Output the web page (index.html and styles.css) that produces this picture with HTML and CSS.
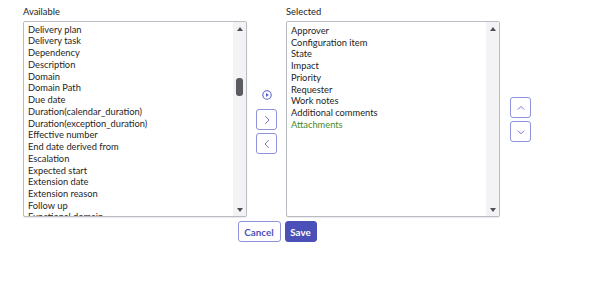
FILE: index.html
```html
<!DOCTYPE html>
<html>
<head>
<meta charset="utf-8">
<link rel="stylesheet" href="styles.css">
</head>
<body>
<div class="form">
  <div class="lists">
    <div class="col col-left">
      <div class="label">Available</div>
      <div class="box box-left">
        <div class="viewport">
          <ul class="items items-scrolled">
            <li>Deliverable</li>
            <li>Delivery plan</li>
            <li>Delivery task</li>
            <li>Dependency</li>
            <li>Description</li>
            <li>Domain</li>
            <li>Domain Path</li>
            <li>Due date</li>
            <li>Duration(calendar_duration)</li>
            <li>Duration(exception_duration)</li>
            <li>Effective number</li>
            <li>End date derived from</li>
            <li>Escalation</li>
            <li>Expected start</li>
            <li>Extension date</li>
            <li>Extension reason</li>
            <li>Follow up</li>
            <li>Functional domain</li>
          </ul>
        </div>
        <div class="scrollbar">
          <span class="arrow arrow-up"></span>
          <div class="track"><span class="thumb"></span></div>
          <span class="arrow arrow-down"></span>
        </div>
      </div>
    </div>
    <div class="mid">
      <svg class="play" width="10" height="10" viewBox="0 0 10 10"><circle cx="5" cy="5" r="4.2" fill="none" stroke="#5b5fd0" stroke-width="1.1"/><path d="M4 3.1 L6.9 5 L4 6.9 Z" fill="#5b5fd0"/></svg>
      <button class="icon-btn"><svg width="10" height="10" viewBox="0 0 10 10"><path d="M3.3 1.2 L7 5 L3.3 8.8" fill="none" stroke="#6f73d6" stroke-width="1"/></svg></button>
      <button class="icon-btn"><svg width="10" height="10" viewBox="0 0 10 10"><path d="M6.7 1.2 L3 5 L6.7 8.8" fill="none" stroke="#6f73d6" stroke-width="1"/></svg></button>
    </div>
    <div class="col col-right">
      <div class="label">Selected</div>
      <div class="box box-right">
        <div class="viewport">
          <ul class="items items-right">
            <li>Approver</li>
            <li>Configuration item</li>
            <li>State</li>
            <li>Impact</li>
            <li>Priority</li>
            <li>Requester</li>
            <li>Work notes</li>
            <li>Additional comments</li>
            <li class="green">Attachments</li>
          </ul>
        </div>
        <div class="scrollbar">
          <span class="arrow arrow-up"></span>
          <div class="track"></div>
          <span class="arrow arrow-down"></span>
        </div>
      </div>
    </div>
    <div class="order">
      <button class="icon-btn"><svg width="10" height="10" viewBox="0 0 10 10"><path d="M1.8 6.6 L5 3.4 L8.2 6.6" fill="none" stroke="#6f73d6" stroke-width="1"/></svg></button>
      <button class="icon-btn"><svg width="10" height="10" viewBox="0 0 10 10"><path d="M1.8 3.6 L5 6.8 L8.2 3.6" fill="none" stroke="#6f73d6" stroke-width="1"/></svg></button>
    </div>
  </div>
  <div class="actions">
    <button class="btn btn-cancel">Cancel</button>
    <button class="btn btn-save">Save</button>
  </div>
</div>
</body>
</html>
```
FILE: styles.css
```css
html, body {
  margin: 0;
  padding: 0;
  background: #ffffff;
}
body {
  font-family: Lato, "Open Sans", sans-serif;
  color: #1e1e1e;
}
.form {
  width: 508px;
  padding: 6px 0 0 23px;
}
.lists {
  display: flex;
  align-items: flex-end;
}
.col {
  display: flex;
  flex-direction: column;
}
.label {
  font-size: 9.4px;
  line-height: 12px;
  height: 15px;
  color: #222222;
}
.box {
  display: flex;
  height: 196px;
  border: 1px solid #b9bcc2;
  border-radius: 2px;
  box-sizing: border-box;
  background: #ffffff;
  box-shadow: 0 1px 1px rgba(0,0,0,0.08);
}
.box-left { width: 224px; }
.box-right { width: 214px; }
.viewport {
  flex: 1;
  overflow: hidden;
  padding: 0 4px;
}
.items {
  list-style: none;
  margin: 0;
  padding: 2px 0 0 0;
  font-size: 9.3px;
  line-height: 11.73px;
}
.items-scrolled {
  margin-top: -12px;
}
.items-right {
  padding-top: 3px;
}
.items li {
  white-space: nowrap;
}
.items li.green {
  color: #3f8a2c;
}
.scrollbar {
  width: 13px;
  background: #f3f3f5;
  display: flex;
  flex-direction: column;
  align-items: center;
  padding: 5px 0 4px;
}
.track {
  flex: 1;
  width: 100%;
  display: flex;
  flex-direction: column;
  align-items: center;
}
.thumb {
  display: block;
  width: 7px;
  height: 18px;
  margin-top: 47px;
  border-radius: 3px;
  background: #5a5c62;
}
.arrow {
  width: 0;
  height: 0;
  border-left: 3.5px solid transparent;
  border-right: 3.5px solid transparent;
}
.arrow-up {
  border-bottom: 4px solid #4e5058;
}
.arrow-down {
  border-top: 4px solid #4e5058;
}
.mid {
  width: 39px;
  height: 196px;
  display: flex;
  flex-direction: column;
  align-items: center;
  padding-top: 69px;
  box-sizing: border-box;
}
.play {
  display: block;
  margin-bottom: 9px;
}
.icon-btn {
  width: 21px;
  height: 21px;
  padding: 0;
  margin: 0 0 3px 0;
  border: 1px solid #8f92dc;
  border-radius: 3px;
  background: #ffffff;
  display: flex;
  align-items: center;
  justify-content: center;
  box-sizing: border-box;
}
.icon-btn svg {
  display: block;
}
.order {
  height: 196px;
  display: flex;
  flex-direction: column;
  justify-content: center;
  margin-left: 10px;
  padding-top: 4px;
  box-sizing: border-box;
}
.actions {
  display: flex;
  justify-content: center;
  gap: 4px;
  margin-top: 4px;
}
.btn {
  height: 21px;
  padding: 0;
  font-family: Lato, sans-serif;
  font-size: 9.8px;
  font-weight: bold;
  border-radius: 3px;
  box-sizing: border-box;
}
.btn-cancel {
  background: #ffffff;
  color: #4e52bc;
  border: 1px solid #8f92dc;
  width: 43px;
}
.btn-save {
  background: #4b4fb8;
  color: #ffffff;
  border: 1px solid #4b4fb8;
  width: 32px;
}
```
